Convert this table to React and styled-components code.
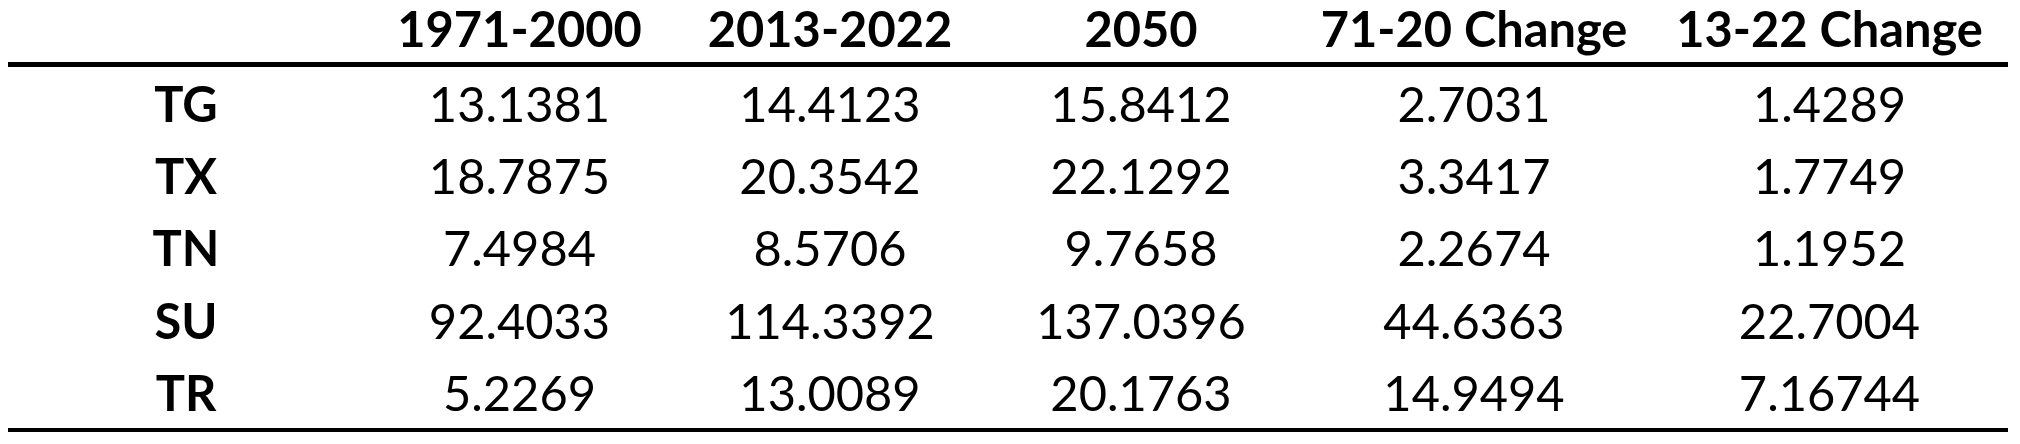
import React from "react";
import styled, { createGlobalStyle } from "styled-components";

const GlobalStyle = createGlobalStyle`
  html, body {
    margin: 0;
    padding: 0;
    background: #ffffff;
  }
  body {
    font-family: Lato, "Open Sans", sans-serif;
    color: #000000;
  }
`;

const Page = styled.div`
  padding: 0 8px;
`;

const Table = styled.div`
  width: 2000px;
  border-bottom: 4px solid #000;
`;

const Row = styled.div`
  display: grid;
  grid-template-columns: 356px 311px 310px 312px 354px 357px;
  height: ${(p) => (p.$head ? "62px" : "72.2px")};
  border-bottom: ${(p) => (p.$head ? "5px solid #000" : "none")};
`;

const Cell = styled.div`
  text-align: center;
  font-size: 48.8px;
  line-height: ${(p) => (p.$head ? "56px" : "72.2px")};
  font-weight: ${(p) => (p.$bold ? 700 : 400)};
  white-space: nowrap;
`;

const columns = ["", "1971-2000", "2013-2022", "2050", "71-20 Change", "13-22 Change"];

const rows = [
  ["TG", "13.1381", "14.4123", "15.8412", "2.7031", "1.4289"],
  ["TX", "18.7875", "20.3542", "22.1292", "3.3417", "1.7749"],
  ["TN", "7.4984", "8.5706", "9.7658", "2.2674", "1.1952"],
  ["SU", "92.4033", "114.3392", "137.0396", "44.6363", "22.7004"],
  ["TR", "5.2269", "13.0089", "20.1763", "14.9494", "7.16744"],
];

export default function App() {
  return (
    <Page>
      <GlobalStyle />
      <Table>
        <Row $head>
          {columns.map((c, i) => (
            <Cell key={i} $head $bold>
              {c}
            </Cell>
          ))}
        </Row>
        {rows.map((r) => (
          <Row key={r[0]}>
            {r.map((v, i) => (
              <Cell key={i} $bold={i === 0}>
                {v}
              </Cell>
            ))}
          </Row>
        ))}
      </Table>
    </Page>
  );
}
